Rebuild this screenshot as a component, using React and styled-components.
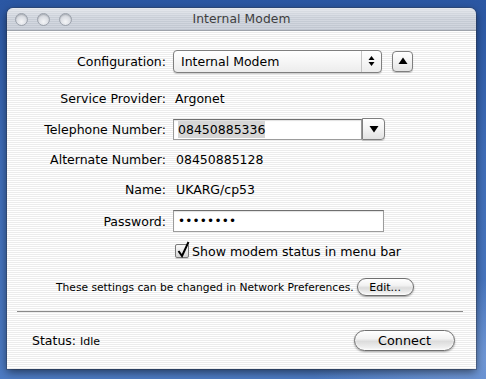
import React from "react";
import styled, { createGlobalStyle } from "styled-components";

const Global = createGlobalStyle`
  html, body { margin: 0; padding: 0; }
  body {
    width: 486px; height: 379px; overflow: hidden;
    font-family: "DejaVu Sans", "Liberation Sans", sans-serif;
    background:
      radial-gradient(ellipse 160px 80px at 470px 360px, rgba(140,175,230,0.6), rgba(140,175,230,0) 100%),
      linear-gradient(180deg, #2b57a3 0%, #3f6db8 40%, #4d7bc3 100%);
  }
`;

const Desktop = styled.div`
  height: 379px;
  box-sizing: border-box;
  padding: 8px 10px 0 7px;
`;

const Window = styled.div`
  width: 469px;
  height: 361px;
  display: flex;
  flex-direction: column;
  border-radius: 6px 6px 0 0;
  overflow: hidden;
  box-shadow: 0 3px 10px rgba(0, 0, 0, 0.55), 0 0 0 1px rgba(60, 70, 90, 0.35);
`;

const TitleBar = styled.div`
  height: 22px;
  display: grid;
  grid-template-columns: 1fr auto 1fr;
  align-items: center;
  border-bottom: 1px solid #9ea3ab;
  background:
    linear-gradient(180deg, rgba(255,255,255,0.5) 0%, rgba(255,255,255,0.12) 45%, rgba(255,255,255,0) 100%),
    repeating-linear-gradient(180deg, #cfd4dd 0 1px, #c0c6d0 1px 2px);
`;

const Lights = styled.div`
  display: flex;
  gap: 9px;
  padding-left: 8px;
`;

const Light = styled.span`
  width: 13px;
  height: 13px;
  border-radius: 50%;
  box-sizing: border-box;
  border: 1px solid #9ba1ab;
  background: radial-gradient(circle at 50% 70%, #f4f5f7 0%, #d9dce2 55%, #b9bec7 100%);
  box-shadow: inset 0 1px 1px rgba(0,0,0,0.15);
`;

const Title = styled.div`
  font-size: 12.3px;
  color: #3e3e3e;
  letter-spacing: 0.1px;
`;

const Body = styled.div`
  flex: 1;
  display: flex;
  flex-direction: column;
  padding: 18px 13px 18px 10px;
  background: repeating-linear-gradient(180deg, #ffffff 0 1px, #ececec 1px 2px);
  font-size: 12.5px;
  color: #000;
`;

const FieldRow = styled.div`
  display: grid;
  grid-template-columns: 149px 1fr;
  column-gap: 7px;
  align-items: center;
  height: ${(p) => p.$h}px;
  margin-top: ${(p) => p.$mt || 0}px;
`;

const Label = styled.div`
  text-align: right;
  white-space: nowrap;
`;

const Controls = styled.div`
  display: flex;
  align-items: center;
`;

const Value = styled.div`
  padding-left: ${(p) => p.$pl ?? 2}px;
  white-space: nowrap;
`;

const Popup = styled.div`
  width: 209px;
  height: 23px;
  box-sizing: border-box;
  display: flex;
  align-items: stretch;
  border: 1px solid #7f7f7f;
  border-radius: 4px;
  background: linear-gradient(180deg, #ffffff 0%, #f6f6f6 50%, #ececec 100%);
  box-shadow: 0 1px 1px rgba(0,0,0,0.2);
`;

const PopupText = styled.div`
  flex: 1;
  display: flex;
  align-items: center;
  padding-left: 7px;
`;

const PopupArrows = styled.div`
  width: 19px;
  display: flex;
  align-items: center;
  justify-content: center;
  border-left: 1px solid #c4c4c4;
`;

const SquareButton = styled.div`
  width: 21px;
  height: 21px;
  margin-left: 10px;
  box-sizing: border-box;
  display: flex;
  align-items: center;
  justify-content: center;
  border: 1px solid #7f7f7f;
  border-radius: 4px;
  background: linear-gradient(180deg, #ffffff 0%, #f3f3f3 50%, #e4e4e4 100%);
  box-shadow: 0 1px 1px rgba(0,0,0,0.2);
`;

const TextField = styled.div`
  width: ${(p) => p.$w}px;
  height: ${(p) => p.$h}px;
  box-sizing: border-box;
  display: flex;
  align-items: center;
  padding-left: 4px;
  background: #fff;
  border: 1px solid #9c9c9c;
  border-top-color: #6f6f6f;
  box-shadow: inset 0 1px 1px rgba(0,0,0,0.12);
`;

const Selected = styled.span`
  background: #d6d6d6;
  padding: 1px 0;
`;

const ComboButton = styled.div`
  width: 23px;
  height: 22px;
  box-sizing: border-box;
  display: flex;
  align-items: center;
  justify-content: center;
  border: 1px solid #7f7f7f;
  border-radius: 0 4px 4px 0;
  background: linear-gradient(180deg, #ffffff 0%, #f3f3f3 50%, #e2e2e2 100%);
  box-shadow: 0 1px 1px rgba(0,0,0,0.2);
`;

const Dots = styled.span`
  letter-spacing: 0.2px;
  font-size: 12px;
`;

const CheckWrap = styled.label`
  display: flex;
  align-items: center;
  gap: 3px;
  padding-left: 2px;
`;

const CheckBox = styled.span`
  position: relative;
  width: 14px;
  height: 14px;
  box-sizing: border-box;
  border: 1px solid #7a7a7a;
  border-radius: 2px;
  background: linear-gradient(180deg, #fafafa 0%, #e6e6e6 60%, #d4d4d4 100%);
  box-shadow: 0 1px 1px rgba(0,0,0,0.15);
`;

const CheckMark = styled.svg`
  position: absolute;
  left: 0px;
  top: -4px;
`;

const CheckText = styled.span`
  font-size: 12.6px;
  white-space: nowrap;
`;

const NoteRow = styled.div`
  display: flex;
  align-items: center;
  gap: 3px;
  height: 18px;
  margin-top: 18px;
  padding-left: 39px;
`;

const Note = styled.div`
  font-size: 10.7px;
  white-space: nowrap;
`;

const AquaButton = styled.div`
  width: ${(p) => p.$w}px;
  height: ${(p) => p.$h}px;
  box-sizing: border-box;
  display: flex;
  align-items: center;
  justify-content: center;
  font-size: ${(p) => p.$fs}px;
  border: 1px solid #6f6f6f;
  border-radius: 999px;
  background: linear-gradient(180deg, #ffffff 0%, #f2f2f2 40%, #dcdcdc 55%, #f6f6f6 100%);
  box-shadow: 0 1px 2px rgba(0,0,0,0.35), inset 0 -1px 2px rgba(255,255,255,0.8);
`;

const Separator = styled.div`
  height: 1px;
  margin-top: 15px;
  background: #8a8a8a;
`;

const Footer = styled.div`
  display: flex;
  align-items: center;
  justify-content: space-between;
  height: 21px;
  margin-top: 18px;
  padding: 0 8px 0 15px;
`;

const Status = styled.div`
  display: flex;
  align-items: baseline;
  gap: 4px;
`;

const Small = styled.span`
  font-size: 11px;
`;

const UpDown = () => (
  <svg width="7" height="12" viewBox="0 0 7 12">
    <path d="M3.5 1 L6.5 5 L0.5 5 Z" fill="#000" />
    <path d="M3.5 11 L6.5 7 L0.5 7 Z" fill="#000" />
  </svg>
);

const Tri = ({ down }) => (
  <svg width="10" height="8" viewBox="0 0 10 8">
    {down ? <path d="M0.5 1 L9.5 1 L5 7.5 Z" fill="#000" /> : <path d="M0.5 7 L9.5 7 L5 0.5 Z" fill="#000" />}
  </svg>
);

export default function App() {
  return (
    <>
      <Global />
      <Desktop>
        <Window>
          <TitleBar>
            <Lights>
              <Light />
              <Light />
              <Light />
            </Lights>
            <Title>Internal Modem</Title>
            <div />
          </TitleBar>
          <Body>
            <FieldRow $h={24}>
              <Label>Configuration:</Label>
              <Controls>
                <Popup>
                  <PopupText>Internal Modem</PopupText>
                  <PopupArrows>
                    <UpDown />
                  </PopupArrows>
                </Popup>
                <SquareButton>
                  <Tri />
                </SquareButton>
              </Controls>
            </FieldRow>
            <FieldRow $h={20} $mt={15}>
              <Label>Service Provider:</Label>
              <Value>Argonet</Value>
            </FieldRow>
            <FieldRow $h={22} $mt={10}>
              <Label>Telephone Number:</Label>
              <Controls>
                <TextField $w={189} $h={21}>
                  <Selected>08450885336</Selected>
                </TextField>
                <ComboButton>
                  <Tri down />
                </ComboButton>
              </Controls>
            </FieldRow>
            <FieldRow $h={20} $mt={9}>
              <Label>Alternate Number:</Label>
              <Value $pl={3}>08450885128</Value>
            </FieldRow>
            <FieldRow $h={20} $mt={10}>
              <Label>Name:</Label>
              <Value $pl={3}>UKARG/cp53</Value>
            </FieldRow>
            <FieldRow $h={22} $mt={11}>
              <Label>Password:</Label>
              <TextField $w={211} $h={22}>
                <Dots>••••••••</Dots>
              </TextField>
            </FieldRow>
            <FieldRow $h={18} $mt={10}>
              <div />
              <CheckWrap>
                <CheckBox>
                  <CheckMark width="16" height="18" viewBox="0 0 16 18">
                    <path d="M2.5 10 L6 15 L12.5 1" stroke="#000" strokeWidth="2" fill="none" />
                  </CheckMark>
                </CheckBox>
                <CheckText>Show modem status in menu bar</CheckText>
              </CheckWrap>
            </FieldRow>
            <NoteRow>
              <Note>These settings can be changed in Network Preferences.</Note>
              <AquaButton $w={57} $h={18} $fs={11}>Edit...</AquaButton>
            </NoteRow>
            <Separator />
            <Footer>
              <Status>
                <span>Status:</span>
                <Small>Idle</Small>
              </Status>
              <AquaButton $w={101} $h={21} $fs={12.8}>Connect</AquaButton>
            </Footer>
          </Body>
        </Window>
      </Desktop>
    </>
  );
}
